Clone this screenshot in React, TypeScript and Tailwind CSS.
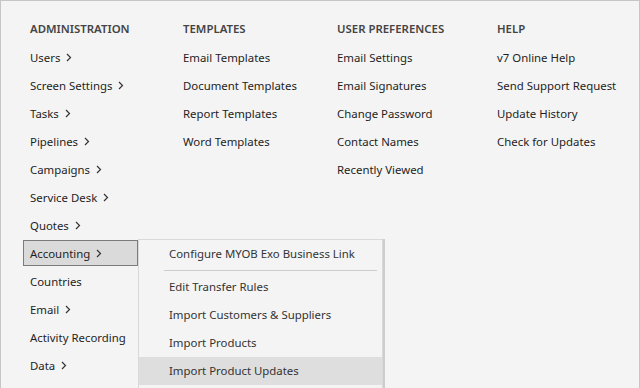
import React from 'react';

type Item = { label: string; sub?: boolean };

const columns: { title: string; width: string; items: Item[] }[] = [
  {
    title: 'ADMINISTRATION',
    width: 'w-[153px]',
    items: [
      { label: 'Users', sub: true },
      { label: 'Screen Settings', sub: true },
      { label: 'Tasks', sub: true },
      { label: 'Pipelines', sub: true },
      { label: 'Campaigns', sub: true },
      { label: 'Service Desk', sub: true },
      { label: 'Quotes', sub: true },
      { label: 'Accounting', sub: true },
      { label: 'Countries' },
      { label: 'Email', sub: true },
      { label: 'Activity Recording' },
      { label: 'Data', sub: true },
    ],
  },
  {
    title: 'TEMPLATES',
    width: 'w-[154px]',
    items: [
      { label: 'Email Templates' },
      { label: 'Document Templates' },
      { label: 'Report Templates' },
      { label: 'Word Templates' },
    ],
  },
  {
    title: 'USER PREFERENCES',
    width: 'w-[160px]',
    items: [
      { label: 'Email Settings' },
      { label: 'Email Signatures' },
      { label: 'Change Password' },
      { label: 'Contact Names' },
      { label: 'Recently Viewed' },
    ],
  },
  {
    title: 'HELP',
    width: 'w-[130px]',
    items: [
      { label: 'v7 Online Help' },
      { label: 'Send Support Request' },
      { label: 'Update History' },
      { label: 'Check for Updates' },
    ],
  },
];

const accountingMenu = [
  'Edit Transfer Rules',
  'Import Customers & Suppliers',
  'Import Products',
  'Import Product Updates',
];

const Chevron = () => (
  <svg width="6" height="9" viewBox="0 0 6 9" className="ml-[6px] shrink-0">
    <polyline points="1,1 4.5,4.5 1,8" fill="none" stroke="#333" strokeWidth="1.2" />
  </svg>
);

const App: React.FC = () => {
  return (
    <div
      className="w-[640px] h-[388px] overflow-hidden bg-[#f4f4f4] border-t border-x border-[#c6c6c6] text-[11.4px] text-[#1e1e1e]"
      style={{ fontFamily: '"Noto Sans", "Open Sans", sans-serif' }}
    >
      <div className="flex pt-[14px] pl-[22px]">
        {columns.map((col, ci) => (
          <div key={col.title} className={`${col.width} shrink-0 ${ci === 0 ? 'relative' : ''}`}>
            <div className="h-[28px] flex items-center pl-[7px] font-semibold text-[#444]">{col.title}</div>
            {col.items.map((it) => {
              const active = it.label === 'Accounting';
              return (
                <div key={it.label} className="h-[28px] py-[1px] relative">
                  <div
                    className={`h-full flex items-center pl-[6px] pt-[1px] border ${
                      active ? 'bg-[#dadada] border-[#7c7c7c] w-[115px]' : 'border-transparent'
                    }`}
                  >
                    <span className="whitespace-nowrap">{it.label}</span>
                    {it.sub && <Chevron />}
                  </div>
                  {active && (
                    <div className="absolute left-[115px] top-0 w-[245px] bg-[#f4f4f4] border border-[#d9d9d9] shadow-[2px_0_0_#cdcdcd] z-10 text-[#333]">
                      <div className="h-[28px] flex items-center pl-[30px] whitespace-nowrap">
                        Configure MYOB Exo Business Link
                      </div>
                      <div className="h-[5px] flex items-center pl-[25px] pr-[5px]">
                        <div className="h-px w-full bg-[#cccccc]" />
                      </div>
                      {accountingMenu.map((m) => (
                        <div
                          key={m}
                          className={`h-[28px] flex items-center pl-[30px] whitespace-nowrap ${
                            m === 'Import Product Updates' ? 'bg-[#dedede]' : ''
                          }`}
                        >
                          {m}
                        </div>
                      ))}
                      <div className="h-[28px]" />
                    </div>
                  )}
                </div>
              );
            })}
          </div>
        ))}
      </div>
    </div>
  );
};

export default App;
